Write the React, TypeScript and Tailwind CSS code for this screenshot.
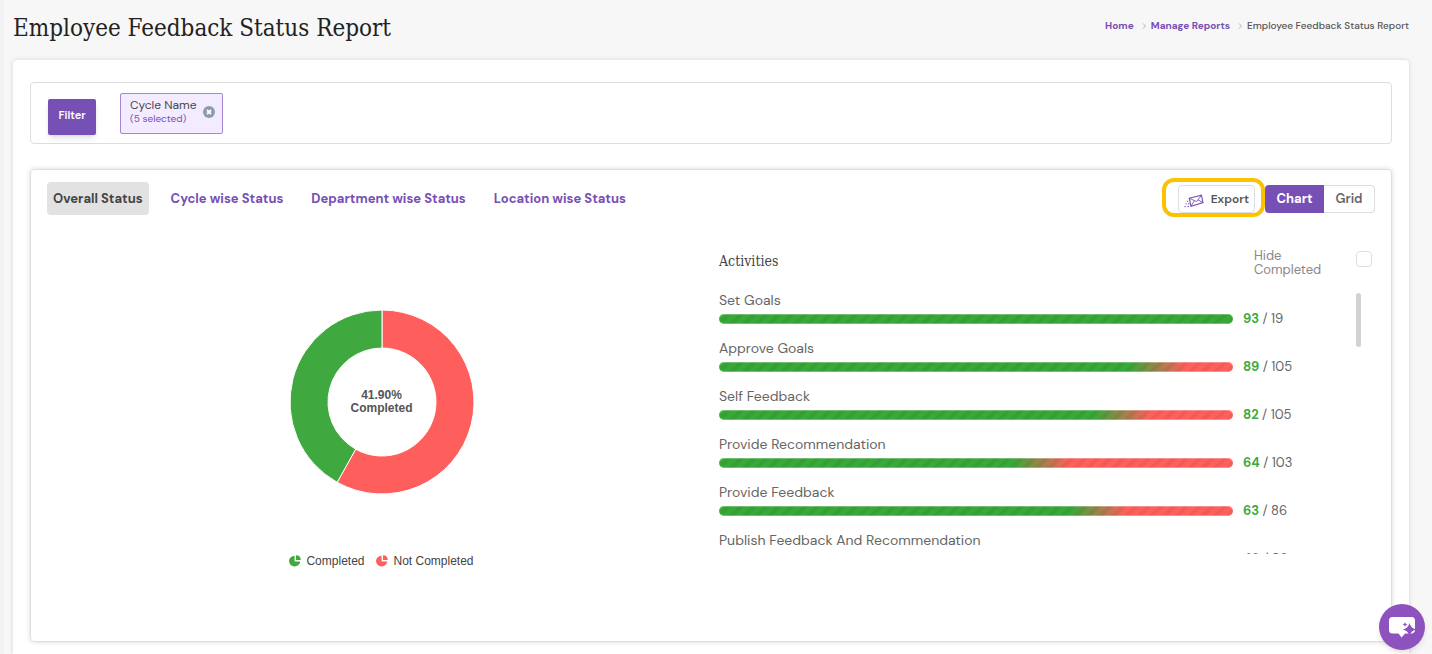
import { Fragment } from 'react'

const STATUS_COMPLETED = '#3fa93f'
const STATUS_PENDING = '#ff5f5c'

interface Activity {
  name: string
  done: number
  total: number
}

const activities: Activity[] = [
  { name: 'Set Goals', done: 93, total: 19 },
  { name: 'Approve Goals', done: 89, total: 105 },
  { name: 'Self Feedback', done: 82, total: 105 },
  { name: 'Provide Recommendation', done: 64, total: 103 },
  { name: 'Provide Feedback', done: 63, total: 86 },
  { name: 'Publish Feedback And Recommendation', done: 49, total: 86 },
]

const tabs = ['Overall Status', 'Cycle wise Status', 'Department wise Status', 'Location wise Status']

const crumbs = ['Home', 'Manage Reports']

function barBackground({ done, total }: Activity) {
  if (done >= total) return '#38a838'
  const pct = (done / total) * 100
  return `linear-gradient(90deg, #38a838 ${pct - 5}%, #ff5f5c ${pct + 6}%)`
}

function Breadcrumbs() {
  return (
    <nav aria-label="Breadcrumb" className="flex items-center text-[10px] leading-4">
      {crumbs.map((crumb) => (
        <Fragment key={crumb}>
          <a href="#" className="font-bold text-[#7650b5]">
            {crumb}
          </a>
          <svg className="mr-1 ml-[7px] size-1.5 text-[#b0b0b0]" viewBox="0 0 6 6" fill="none" stroke="currentColor" aria-hidden="true">
            <path d="M2 0.5 4.5 3 2 5.5" />
          </svg>
        </Fragment>
      ))}
      <span className="font-medium text-[#555]">Employee Feedback Status Report</span>
    </nav>
  )
}

function FilterBar() {
  return (
    <section className="flex items-center gap-6 rounded border border-[#dedede] px-[17px] py-2">
      <button className="mt-2 h-9 w-12 rounded-xs bg-[#7650b5] pb-1 text-[11px] font-semibold text-white shadow-md">
        Filter
      </button>
      <div className="flex h-[41px] items-center gap-1.5 rounded-xs border border-[#a685d6] bg-[#f3ebff] pr-[7px] pb-0.5 pl-[9px]">
        <div>
          <div className="text-xs leading-[14px] text-[#4a4a4a]">Cycle Name</div>
          <div className="text-[10px] leading-[14px] text-[#7650b5]">(5 selected)</div>
        </div>
        <button aria-label="Remove Cycle Name filter">
          <svg className="size-3" viewBox="0 0 12 12" aria-hidden="true">
            <circle cx="6" cy="6" r="6" fill="#8c9cae" />
            <path d="M4 4l4 4M8 4l-4 4" stroke="#fff" strokeWidth="1.8" />
          </svg>
        </button>
      </div>
    </section>
  )
}

function EnvelopeIcon() {
  return (
    <svg className="mt-1 h-4 w-5" viewBox="0 0 20 16" fill="none" stroke="#7650b5" aria-hidden="true">
      <path d="M5.2 5.2 17.4 2.2 19 9.6 7 13.2Z" strokeWidth="1.1" />
      <path d="M5.2 5.2 12.6 8.6 17.4 2.2M7 13.2 10.4 7.8M19 9.6 14 6.8" strokeWidth="0.9" />
      <path d="M3 8.3h1.2M1.6 10.9h1.2M4 10.9h1.4M0.4 13.6h1.4M3.4 13.6h1.6" strokeWidth="1" />
    </svg>
  )
}

function Toolbar() {
  return (
    <div className="flex items-center justify-between">
      <div role="tablist" className="flex items-center gap-4">
        {tabs.map((tab, i) => (
          <button
            key={tab}
            role="tab"
            aria-selected={i === 0}
            className={
              i === 0
                ? 'h-[33px] rounded bg-[#e2e2e2] px-1.5 text-[13px] font-bold text-[#444]'
                : 'h-[33px] rounded px-1.5 text-[13px] font-bold text-[#7650b5]'
            }
          >
            {tab}
          </button>
        ))}
      </div>
      <div className="flex items-center gap-2.5">
        <div className="relative">
          <button className="flex h-7 w-[77px] items-center justify-between rounded border border-[#dedede] bg-white px-[5px] text-xs font-semibold text-[#555]">
            <EnvelopeIcon />
            Export
          </button>
          <span className="pointer-events-none absolute -top-[7px] -right-2.5 -bottom-1 -left-4 rounded-xl border-4 border-[#fbc200]" />
        </div>
        <div className="flex h-7 text-[13px] font-semibold">
          <button aria-pressed="true" className="w-[59px] rounded-l bg-[#7650b5] font-bold text-white">
            Chart
          </button>
          <button aria-pressed="false" className="w-[51px] rounded-r border border-l-0 border-[#dedede] text-[#666]">
            Grid
          </button>
        </div>
      </div>
    </div>
  )
}

function slicePath(from: number, to: number) {
  const outer = 92
  const inner = 54
  const point = (r: number, share: number) => {
    const angle = share * 2 * Math.PI
    return `${93 + r * Math.sin(angle)} ${93 - r * Math.cos(angle)}`
  }
  const large = to - from > 0.5 ? 1 : 0
  return `M${point(outer, from)}A${outer} ${outer} 0 ${large} 1 ${point(outer, to)}L${point(inner, to)}A${inner} ${inner} 0 ${large} 0 ${point(inner, from)}Z`
}

function LegendItem({ color, label }: { color: string; label: string }) {
  return (
    <li className="flex items-center gap-[5px]">
      <svg className="size-3" viewBox="0 0 12 12" fill={color} aria-hidden="true">
        <path d="M5.6 0.8V6.4H11.2A5.6 5.3 0 1 1 5.6 0.8Z" />
        <path d="M7 0.2A5 5 0 0 1 11.8 5H7Z" />
      </svg>
      {label}
    </li>
  )
}

function StatusDonut({ completed }: { completed: number }) {
  const split = 1 - completed / 100
  return (
    <div className="flex flex-col items-center pt-15 pl-[5px] font-['Liberation_Sans',Arial,sans-serif] text-xs text-[#444]">
      <div className="grid place-items-center *:col-start-1 *:row-start-1">
        <svg className="size-[186px]" viewBox="0 0 186 186" stroke="#fff" strokeWidth="1" aria-hidden="true">
          <path d={slicePath(0, split)} fill={STATUS_PENDING} />
          <path d={slicePath(split, 1)} fill={STATUS_COMPLETED} />
        </svg>
        <p className="text-center leading-[13px] font-bold text-[#555]">
          {completed.toFixed(2)}%
          <br />
          Completed
        </p>
      </div>
      <ul className="mt-14 flex gap-3 leading-5">
        <LegendItem color={STATUS_COMPLETED} label="Completed" />
        <LegendItem color={STATUS_PENDING} label="Not Completed" />
      </ul>
    </div>
  )
}

function ActivityRow({ activity }: { activity: Activity }) {
  return (
    <li className="h-12">
      <div className="text-sm leading-5 text-[#666]">{activity.name}</div>
      <div className="flex h-[18px] items-center">
        <div
          className="h-2.5 flex-1 overflow-hidden rounded-full"
          style={{ background: barBackground(activity) }}
        >
          <div className="h-full rounded-full bg-[repeating-linear-gradient(135deg,transparent_0_5px,rgb(0_0_0/0.05)_5px_9px)] shadow-[inset_0_1px_rgb(255_255_255/0.3),inset_0_-1px_rgb(255_255_255/0.3)]" />
        </div>
        <div className="w-32 pl-2.5 text-[13px] leading-4 text-[#666]">
          <span className="font-bold text-[#3fa93f]">{activity.done}</span> / {activity.total}
        </div>
      </div>
    </li>
  )
}

function ActivityList() {
  return (
    <div className="pl-2">
      <div className="flex items-start">
        <h2 className="flex-1 pt-0.5 font-['Roboto_Slab','DejaVu_Serif_Condensed','DejaVu_Serif',serif] text-sm leading-5 font-medium text-[#444]">
          Activities
        </h2>
        <label htmlFor="hide-completed" className="w-[102px] pr-8 text-[13px] leading-[14px] text-[#888]">
          Hide Completed
        </label>
        <input
          id="hide-completed"
          type="checkbox"
          className="mt-0.5 mr-[3px] size-4 appearance-none rounded border border-[#dedede] bg-white checked:bg-[#7650b5]"
        />
      </div>
      <div className="mt-[13px] flex pr-3.5">
        <ul className="h-[264px] flex-1 overflow-y-auto [scrollbar-width:none]">
          {activities.map((activity) => (
            <ActivityRow key={activity.name} activity={activity} />
          ))}
        </ul>
        <div className="mt-[3px] -ml-[5px] h-[54px] w-[5px] rounded-full bg-[#d2d2d2]" />
      </div>
    </div>
  )
}

function ChatButton() {
  return (
    <button
      aria-label="Open assistant"
      className="fixed right-[7px] bottom-1 grid size-[46px] place-items-center rounded-full bg-[#8e52bf] shadow-md"
    >
      <svg className="h-6 w-7" viewBox="0 0 28 24" aria-hidden="true">
        <path
          d="M4.5 2h19A3.5 3.5 0 0 1 27 5.500v9A3.500 3.500 0 0 1 23.500 18.500H17L13.500 22.500 10.500 18.500H4.500A3.500 3.500 0 0 1 1 15V5.500A3.500 3.500 0 0 1 4.500 2Z"
          fill="#fff"
        />
        <path
          d="M21.500 8Q22.800 13.200 28 14.500 22.800 15.800 21.500 21 20.200 15.800 15 14.500 20.200 13.200 21.500 8ZM17 7.200Q17.400 9.100 19.300 9.500 17.400 9.900 17 11.800 16.600 9.900 14.700 9.500 16.600 9.100 17 7.200Z"
          fill="#8e52bf"
        />
      </svg>
    </button>
  )
}

export default function App() {
  return (
    <div className="flex min-h-screen flex-col border-l-4 border-[#f2f2f2] bg-[#f7f7f7] pr-[23px] pl-[9px] font-['DM_Sans',Inter,sans-serif]">
      <header className="flex items-start justify-between pt-2.5 pb-3.5">
        <h1 className="font-['Roboto_Slab','DejaVu_Serif_Condensed','DejaVu_Serif',serif] text-2xl leading-9 text-[#222]">
          Employee Feedback Status Report
        </h1>
        <div className="pt-2">
          <Breadcrumbs />
        </div>
      </header>
      <main className="flex-1 rounded-t bg-white px-[17px] pt-[22px] pb-3 shadow-[0_0_4px_rgb(0_0_0/0.15)]">
        <FilterBar />
        <section className="mt-[25px] rounded border border-[#dedede] px-4 pt-3 pb-[70px] shadow-[0_0_5px_rgb(0_0_0/0.15)]">
          <Toolbar />
          <div className="mt-[34px] grid grid-cols-2">
            <StatusDonut completed={41.9} />
            <ActivityList />
          </div>
        </section>
      </main>
      <ChatButton />
    </div>
  )
}
